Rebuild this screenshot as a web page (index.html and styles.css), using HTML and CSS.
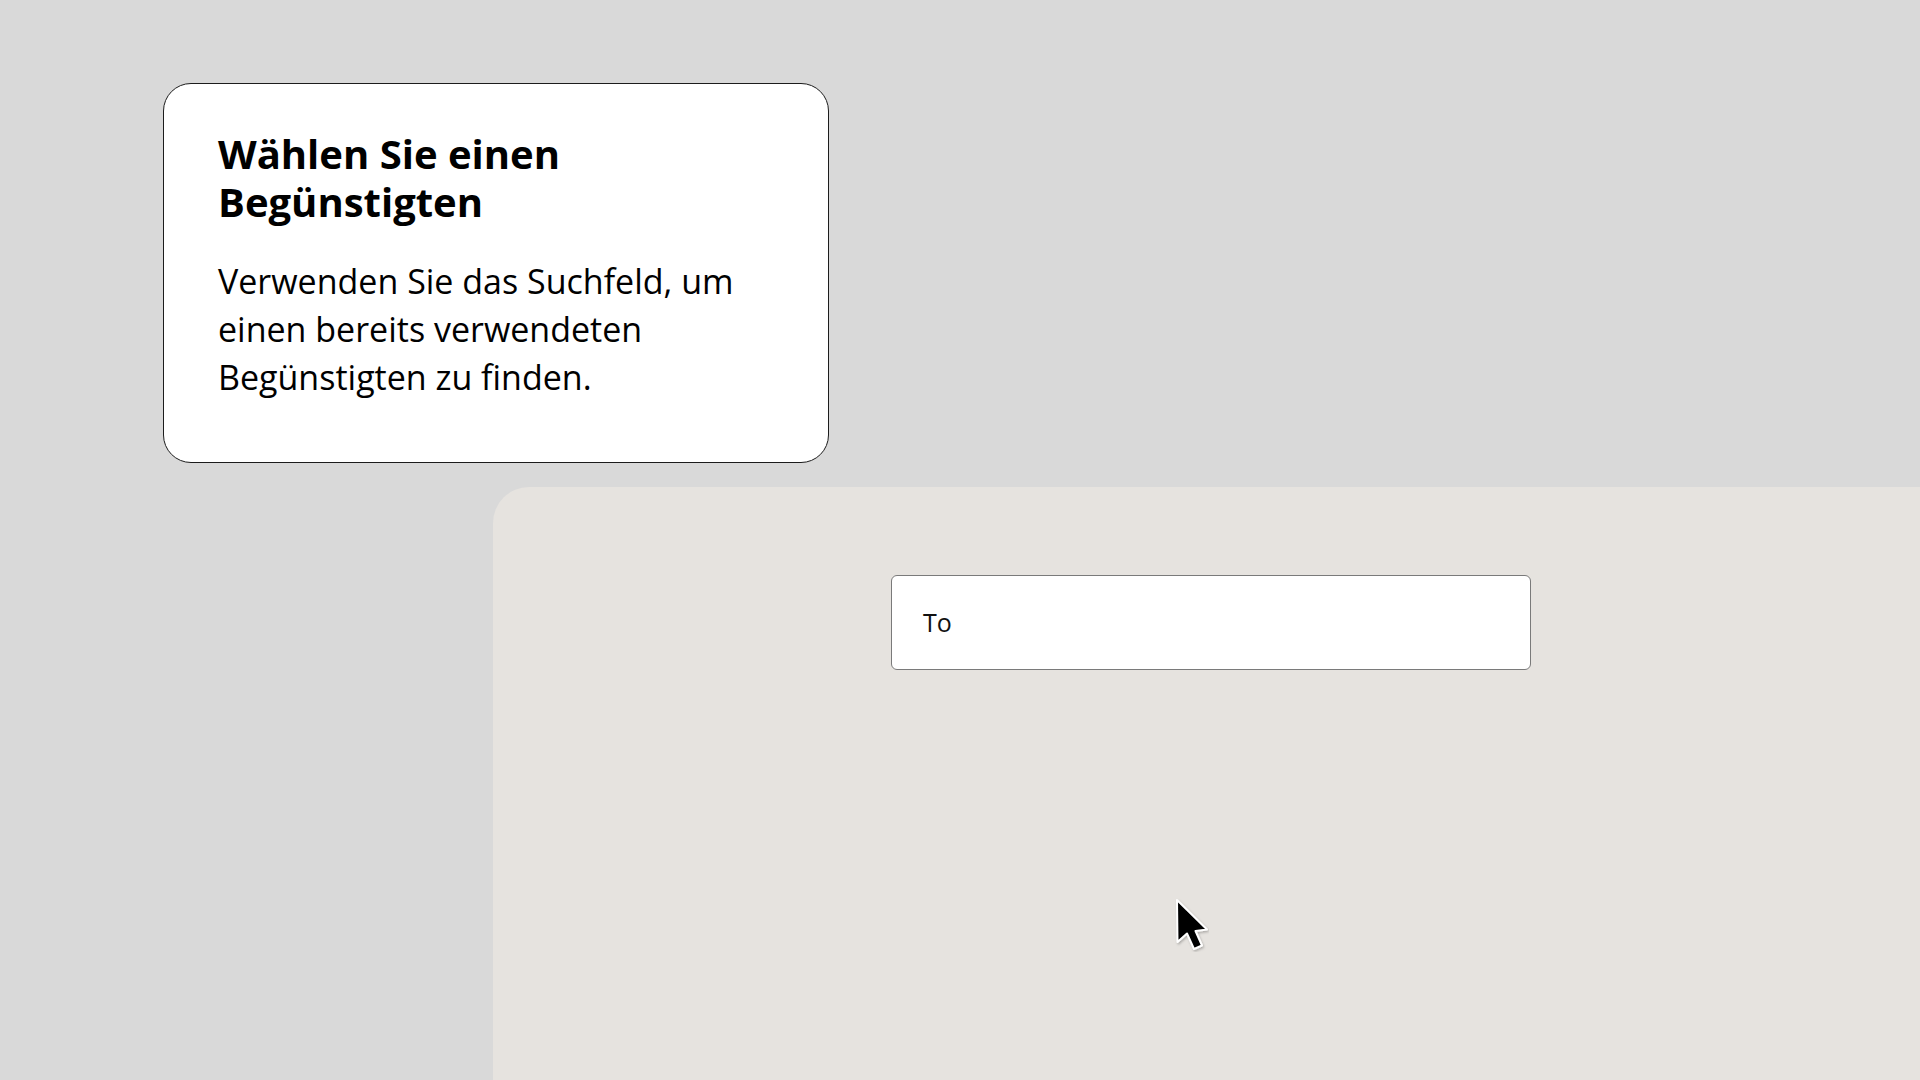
FILE: index.html
```html
<!DOCTYPE html>
<html lang="de">
<head>
<meta charset="utf-8">
<title>Begünstigten wählen</title>
<link rel="stylesheet" href="styles.css">
</head>
<body>
  <div class="page">
    <section class="tip-card">
      <h1 class="tip-title">Wählen Sie einen Begünstigten</h1>
      <p class="tip-text">Verwenden Sie das Suchfeld, um einen bereits verwendeten Begünstigten zu finden.</p>
    </section>
    <main class="panel">
      <div class="to-field"><span class="to-label">To</span></div>
    </main>
    <svg class="cursor" width="34" height="54" viewBox="-2 -2 34 54" aria-hidden="true">
      <defs>
        <filter id="sh" x="-30%" y="-30%" width="160%" height="160%">
          <feDropShadow dx="1" dy="1.5" stdDeviation="1.2" flood-color="#000" flood-opacity="0.25"/>
        </filter>
      </defs>
      <path d="M0 0 L0.5 42 L10 33.5 L17 49 L25 45.5 L18.5 31 L30 29.5 Z" fill="#000" stroke="#fff" stroke-width="2" stroke-linejoin="round" filter="url(#sh)"/>
    </svg>
  </div>
</body>
</html>
```
FILE: styles.css
```css
* { box-sizing: border-box; }
html, body {
  margin: 0;
  padding: 0;
  height: 100%;
}
body {
  background: #d9d9d9;
  font-family: "Open Sans", "Noto Sans", "Liberation Sans", sans-serif;
  color: #000;
  overflow: hidden;
}
.page {
  position: relative;
  height: 100vh;
  display: flex;
  flex-direction: column;
}
.tip-card {
  margin: 83px 0 0 163px;
  width: 666px;
  height: 380px;
  background: #fff;
  border: 1px solid #1c1c1c;
  border-radius: 28px;
  padding: 46px 55px 0 54px;
}
.tip-title {
  margin: 0;
  font-size: 40px;
  font-weight: 700;
  line-height: 48px;
  letter-spacing: 0;
}
.tip-text {
  margin: 31px 0 0;
  font-size: 34px;
  font-weight: 400;
  line-height: 48px;
}
.panel {
  flex: 1;
  margin: 24px 0 0 493px;
  background: #e6e3df;
  border-top-left-radius: 36px;
  padding: 88px 0 0 398px;
}
.to-field {
  width: 640px;
  height: 95px;
  background: #fff;
  border: 1px solid #7a7a7a;
  border-radius: 6px;
  display: flex;
  align-items: center;
  padding-left: 31px;
}
.to-label {
  font-size: 25px;
  line-height: 1;
  color: #111;
}
.cursor {
  position: absolute;
  left: 1175px;
  top: 898px;
}
```
